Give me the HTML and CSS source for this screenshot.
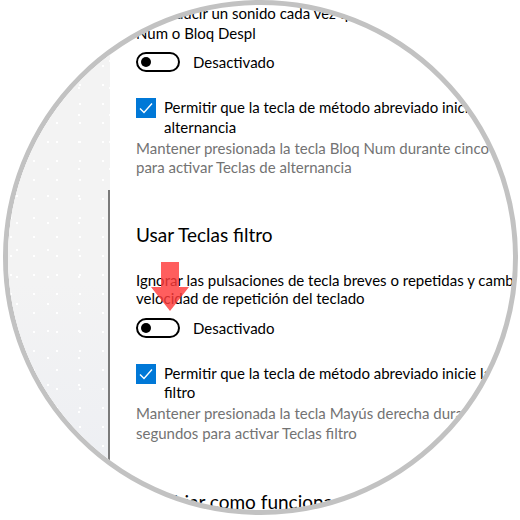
FILE: index.html
```html
<!DOCTYPE html>
<html lang="es">
<head>
  <meta charset="UTF-8" />
  <title>Teclado – Accesibilidad</title>
  <link rel="stylesheet" href="styles.css">
</head>
<body>
  <div class="lens">
    <aside class="sidebar">
      <div class="sidebar-line"></div>
    </aside>

    <main class="content">
      <p class="text first">Reproducir un sonido cada vez que presione Bloq Mayús, Bloq<br>Num o Bloq Despl</p>

      <div class="toggle-row">
        <span class="toggle"><span class="knob"></span></span>
        <span class="toggle-label">Desactivado</span>
      </div>

      <div class="check-row">
        <span class="checkbox">
          <svg width="20" height="20" viewBox="0 0 20 20"><polyline points="4,10.5 8,14.5 16,5.5" fill="none" stroke="#fff" stroke-width="1.4"/></svg>
        </span>
        <span class="check-label">Permitir que la tecla de método abreviado inicie Teclas de<br>alternancia</span>
      </div>
      <p class="hint">Mantener presionada la tecla Bloq Num durante cinco segundos<br>para activar Teclas de alternancia</p>

      <h2 class="section-title">Usar Teclas filtro</h2>

      <p class="text tight">Ignorar las pulsaciones de tecla breves o repetidas y cambiar la<br>velocidad de repetición del teclado</p>

      <div class="toggle-row second">
        <span class="toggle"><span class="knob"></span></span>
        <span class="toggle-label">Desactivado</span>
      </div>

      <div class="check-row">
        <span class="checkbox">
          <svg width="20" height="20" viewBox="0 0 20 20"><polyline points="4,10.5 8,14.5 16,5.5" fill="none" stroke="#fff" stroke-width="1.4"/></svg>
        </span>
        <span class="check-label">Permitir que la tecla de método abreviado inicie las Teclas<br>filtro</span>
      </div>
      <p class="hint">Mantener presionada la tecla Mayús derecha durante ocho<br>segundos para activar Teclas filtro</p>

      <h2 class="section-title last">Cambiar como funciona el teclado</h2>
    </main>

    <!-- flecha roja que señala el interruptor -->
    <svg class="arrow" width="38" height="50" viewBox="0 0 38 50">
      <polygon points="10,0 28,0 28,25 38,25 19,49 0,25 10,25" fill="#ff3b3b" fill-opacity="0.82"/>
    </svg>
  </div>
</body>
</html>
```

FILE: styles.css
```css
body {
  margin: 0;
  background: #fff;
  font-family: 'Lato', 'Noto Sans', sans-serif;
  color: #000;
}
.lens {
  position: relative;
  box-sizing: border-box;
  width: 515px;
  height: 515px;
  margin-left: 3px;
  border: 5px solid #c2c2c2;
  border-radius: 50%;
  overflow: hidden;
  display: flex;
  background: #fff;
}
.sidebar {
  flex: 0 0 102px;
  display: flex;
  justify-content: flex-end;
  background-color: #f2f2f2;
  background-image:
    radial-gradient(circle at 3px 4px, #fff 0.8px, rgba(255,255,255,0) 1.3px),
    radial-gradient(circle at 9px 2px, #fff 0.7px, rgba(255,255,255,0) 1.2px),
    linear-gradient(to bottom, #f3f3f3 55%, #eceef3);
  background-size: 23px 19px, 31px 27px, 100% 100%;
}
.sidebar-line {
  width: 2px;
  margin-top: 185px;
  background: #7a7a7a;
}
.content {
  flex: 1;
  padding-left: 26px;
  white-space: nowrap;
  font-size: 15px;
}
.text {
  margin: 0;
  line-height: 20px;
}
.text.first {
  margin-top: -2px;
}
.text.tight {
  margin-top: 23px;
  line-height: 18px;
}
.toggle-row {
  display: flex;
  align-items: center;
  gap: 13px;
  margin-top: 9px;
  line-height: 20px;
}
.toggle-row.second {
  margin-top: 11px;
}
.toggle {
  box-sizing: border-box;
  width: 44px;
  height: 20px;
  border: 2px solid #000;
  border-radius: 10px;
  display: flex;
  align-items: center;
  padding-left: 3px;
}
.knob {
  width: 10px;
  height: 10px;
  border-radius: 50%;
  background: #000;
}
.check-row {
  display: flex;
  align-items: flex-start;
  gap: 8px;
  margin-top: 26px;
}
.checkbox {
  flex: 0 0 20px;
  height: 20px;
  background: #0078d7;
}
.checkbox svg {
  display: block;
}
.check-label {
  line-height: 19.5px;
}
.hint {
  margin: 1.5px 0 0;
  line-height: 19.5px;
  color: #737373;
}
.section-title {
  margin: 44px 0 0;
  font-size: 19px;
  font-weight: 400;
  line-height: 26px;
}
.section-title.last {
  margin-top: 46px;
}
.arrow {
  position: absolute;
  left: 143px;
  top: 257px;
}
```
